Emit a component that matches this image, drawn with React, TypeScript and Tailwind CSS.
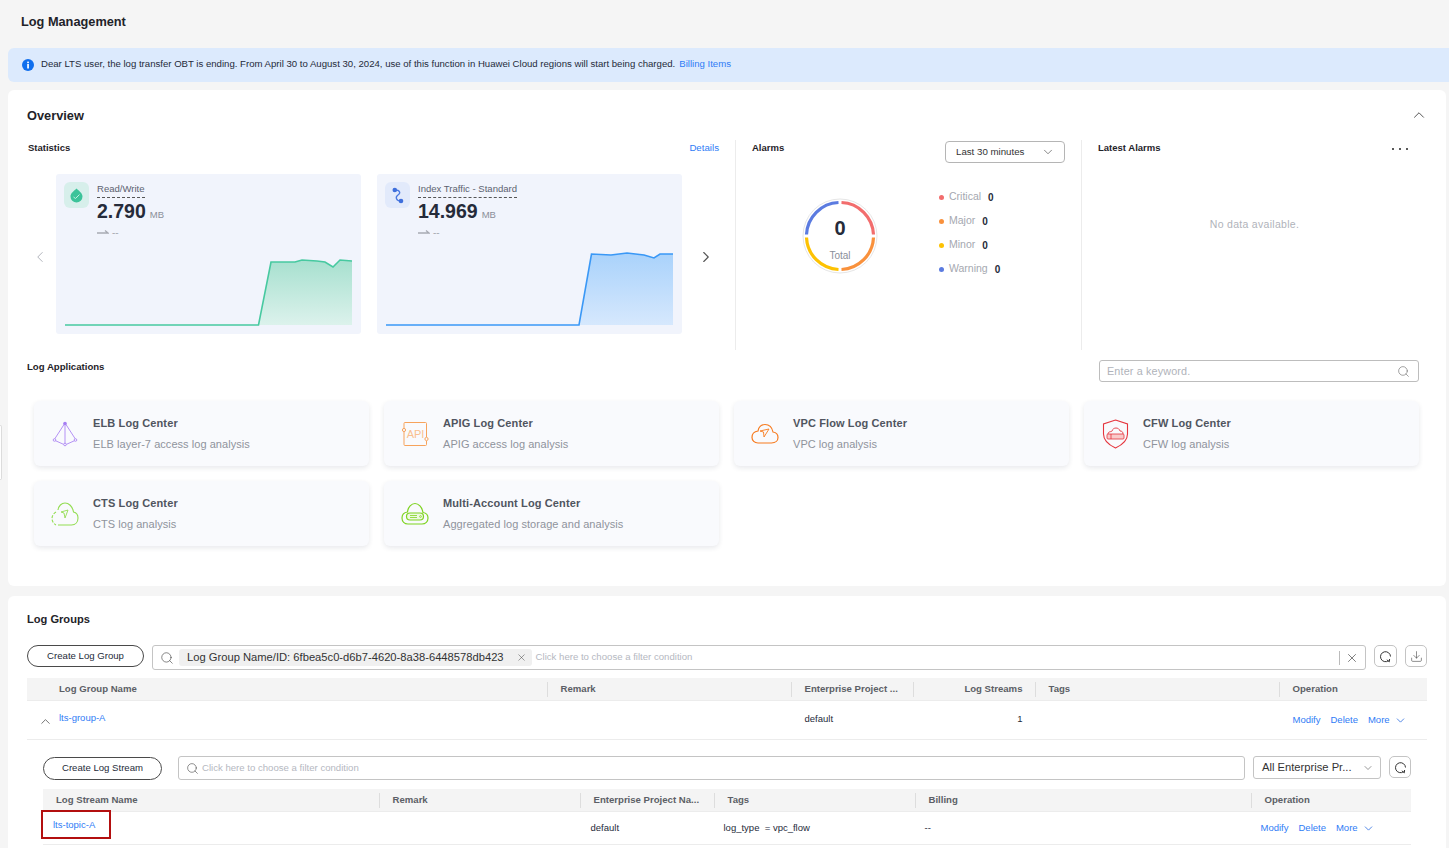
import React from "react";
import { ChevronUp, ChevronDown, ChevronLeft, ChevronRight, Search, X, Download } from "lucide-react";

const greenLine = "M1 73 L194.500 73 L207 10 L231 10 L238 8 L253 9 L261 10 L269 15 L276 8 L288 9";
const blueLine = "M1 73 L194 73 L206.500 2 L226 3 L242 1 L259 3 L269 6 L275 2 L288 2";

const Refresh = () => (
  <svg width="13" height="13" viewBox="0 0 13 13" fill="none" stroke="#333" strokeWidth="1">
    <path d="M9.500 10.700 A5 5 0 1 1 11.500 6.500" />
    <path d="M7.800 9.800 L10.300 11.800 L10.600 9" />
  </svg>
);

const Chart = ({ line, stroke, id, from, to }: { line: string; stroke: string; id: string; from: string; to: string }) => (
  <svg viewBox="0 0 288 75" className="w-[288px] h-[75px] ml-[8px] mb-[7px] block">
    <defs>
      <linearGradient id={id} x1="0" y1="0" x2="0" y2="1">
        <stop offset="0" stopColor={from} />
        <stop offset="1" stopColor={to} />
      </linearGradient>
    </defs>
    <path d={`${line} L288 73 Z`} fill={`url(#${id})`} />
    <path d={line} fill="none" stroke={stroke} strokeWidth="1.600" />
  </svg>
);

const StatCard = ({ icon, iconBg, label, value, children }: { icon: React.ReactNode; iconBg: string; label: string; value: string; children: React.ReactNode }) => (
  <div className="w-[305px] h-[160px] bg-[#f1f4fc] rounded-[3px] flex flex-col justify-between">
    <div className="flex pt-2 pl-2">
      <div className={`w-[25px] h-[26px] rounded-md flex items-center justify-center ${iconBg}`}>{icon}</div>
      <div className="ml-2 flex flex-col items-start">
        <span className="text-[9.550px] leading-[13px] text-[#5c6270] pb-[2px] border-b border-dashed border-[#555]">{label}</span>
        <div className="flex items-baseline mt-[1px] h-[25px]">
          <span className="text-[19.500px] leading-[24px] font-bold text-[#252b3a]">{value}</span>
          <span className="text-[9.500px] text-[#8a8e99] ml-[4px]">MB</span>
        </div>
        <div className="flex items-center text-[#a8abb3] text-[10px] leading-[12px] mt-[3px] h-3">
          <svg width="12" height="8" viewBox="0 0 12 8" fill="none">
            <path d="M0 4 H11 M8 1.500 L11 4 L8 4" stroke="#a8abb3" strokeWidth="1.300" />
          </svg>
          <span className="ml-[3px]">--</span>
        </div>
      </div>
    </div>
    {children}
  </div>
);

const Legend = ({ color, label, count }: { color: string; label: string; count: number }) => (
  <div className="flex items-center h-6">
    <span className={`w-[5px] h-[5px] rounded-full ${color}`} />
    <span className="ml-[5px] text-[#a5a8b0] text-[10.500px]">{label}</span>
    <span className="ml-[7px] text-[#252b3a] text-[10px] font-bold">{count}</span>
  </div>
);

const AppCard = ({ icon, title, desc }: { icon: React.ReactNode; title: string; desc: string }) => (
  <div className="h-[65px] bg-[#f9fafd] rounded-md shadow-[0_2px_5px_rgba(30,40,70,0.10)] flex items-center pl-[17px]">
    <div className="w-[28px] h-[28px] flex items-center justify-center shrink-0">{icon}</div>
    <div className="ml-[14px] flex flex-col gap-[7px]">
      <span className="text-[11px] leading-[14px] font-semibold tracking-[0.12px] text-[#50555f]">{title}</span>
      <span className="text-[11px] leading-[14px] tracking-[0.05px] text-[#8f939c]">{desc}</span>
    </div>
  </div>
);

const HeadCell = ({ children, first, right, pl }: { children: string; first?: boolean; right?: boolean; pl?: string }) => (
  <div className={`h-[15px] flex items-center text-[9.600px] font-semibold text-[#5c5f66] whitespace-nowrap ${first ? "" : "border-l border-[#dddddd]"} ${right ? "justify-end pr-3" : "pl-[13px]"} ${pl ?? ""}`}>
    {children}
  </div>
);

const Ops = () => (
  <div className="flex items-center text-[9.500px] text-[#2f7cf6] pl-[14px] gap-[10px]">
    <span>Modify</span>
    <span>Delete</span>
    <span className="flex items-center gap-[4px]">
      More <ChevronDown size={13} strokeWidth={1.500} className="text-[#2f6fe0]" />
    </span>
  </div>
);

const IconButton = ({ children, w }: { children: React.ReactNode; w: string }) => (
  <div className={`h-[22px] ${w} border border-[#c4c4c4] rounded-[5px] flex items-center justify-center text-[#333] shrink-0`}>{children}</div>
);

export default function App() {
  return (
    <div className="w-[1449px] h-[848px] overflow-hidden bg-[#f5f5f5] relative font-['Liberation_Sans',Arial,sans-serif]">
      <div className="absolute left-0 top-[425px] w-[2px] h-[55px] bg-white border-r border-y border-[#dcdcdc] rounded-r-sm" />

      <div className="h-[48px] pl-[21px] pt-[14px] text-[12.750px] leading-[15px] font-semibold text-[#1f2329]">Log Management</div>

      <div className="ml-2 h-[34px] bg-[#dceafd] rounded-l-md flex items-center pl-[14px] text-[9.600px] text-[#252b3a]">
        <svg width="12" height="12" viewBox="0 0 12 12">
          <circle cx="6" cy="6" r="6" fill="#0f6fee" />
          <rect x="5.200" y="5" width="1.700" height="4.500" fill="#fff" />
          <rect x="5.200" y="2.600" width="1.700" height="1.600" fill="#fff" />
        </svg>
        <span className="ml-[7px] -mt-px">Dear LTS user, the log transfer OBT is ending. From April 30 to August 30, 2024, use of this function in Huawei Cloud regions will start being charged.</span>
        <span className="ml-[4px] -mt-px text-[#2f7cf6]">Billing Items</span>
      </div>

      <div className="ml-2 mr-[3px] mt-2 h-[496px] bg-white rounded-md flex flex-col">
        <div className="h-[50px] pl-[19px] pr-[18px] flex items-center justify-between">
          <span className="text-[12.800px] font-semibold text-[#1f2329] mt-[1px]">Overview</span>
          <ChevronUp size={18} strokeWidth={1.100} className="text-[#333]" />
        </div>

        <div className="flex h-[210px]">
          <div className="w-[727px] pl-[20px] relative">
            <div className="flex justify-between pr-[16px] pt-[2px] text-[9.500px] leading-[11px]">
              <span className="font-bold text-[#1f2329]">Statistics</span>
              <span className="text-[#2f7cf6] text-[9.700px]">Details</span>
            </div>
            <div className="flex items-center mt-[21px]">
              <ChevronLeft size={18} strokeWidth={1.300} className="text-[#b0b3ba] ml-[3px] mt-[6px]" />
              <div className="ml-[7px] flex gap-4">
                <StatCard
                  iconBg="bg-[#d7efeb]"
                  label="Read/Write"
                  value="2.790"
                  icon={
                    <svg width="13" height="15" viewBox="0 0 13 15">
                      <path d="M6.500 0.500 C9 3 12.500 5 12.500 8.500 A6 6 0 0 1 0.500 8.500 C0.500 5 4 3 6.500 0.500 Z" fill="#3cc39a" />
                      <path d="M3.500 9 L5.500 10.500 L9.500 6.500" stroke="#bff0e0" strokeWidth="1" fill="none" />
                    </svg>
                  }
                >
                  <Chart line={greenLine} stroke="#47c9a0" id="greenFill" from="#a7e0cf" to="#dcf2ec" />
                </StatCard>
                <StatCard
                  iconBg="bg-[#e2eafb]"
                  label="Index Traffic - Standard"
                  value="14.969"
                  icon={
                    <svg width="12" height="17" viewBox="0 0 12 17" fill="none">
                      <path d="M3 3 C8 3 9 6 6 8 C3 10 4 14 9 14" stroke="#4a78e0" strokeWidth="1.300" />
                      <circle cx="2.800" cy="3" r="2.300" fill="#3f6fdc" />
                      <circle cx="9" cy="14" r="2.300" fill="#3f6fdc" />
                    </svg>
                  }
                >
                  <Chart line={blueLine} stroke="#3a98f6" id="blueFill" from="#a9d2fb" to="#d6e8fd" />
                </StatCard>
              </div>
              <ChevronRight size={18} strokeWidth={1.500} className="text-[#555] ml-[15px] mt-[6px]" />
            </div>
          </div>

          <div className="w-[346px] border-l border-[#ececec] pl-4 pr-4">
            <div className="flex justify-between items-start h-[23px]">
              <span className="text-[9.500px] leading-[11px] font-bold text-[#1f2329] pt-[2px]">Alarms</span>
              <div className="w-[120px] h-[22px] mt-[1px] border border-[#b5b5b5] rounded-[4px] flex items-center justify-between pl-[10px] pr-[9px] text-[9.700px] text-[#333]">
                Last 30 minutes
                <ChevronDown size={14} strokeWidth={1} />
              </div>
            </div>
            <div className="flex mt-[22px]">
              <div className="w-[76px] h-[76px] ml-[50px] mt-[13px] relative flex flex-col items-center">
                <svg width="76" height="76" viewBox="0 0 76 76" className="absolute inset-0" fill="none" strokeWidth="3.200">
                  <circle cx="38" cy="38" r="37" stroke="#e6e6e6" strokeWidth="1" />
                  <path d="M39.500 4.500 A33.500 33.500 0 0 1 71.500 36.500" stroke="#f26d6d" />
                  <path d="M71.500 39.500 A33.500 33.500 0 0 1 39.500 71.500" stroke="#f9913c" />
                  <path d="M36.500 71.500 A33.500 33.500 0 0 1 4.500 39.500" stroke="#fdc203" />
                  <path d="M4.500 36.500 A33.500 33.500 0 0 1 36.500 4.500" stroke="#5b7be0" />
                </svg>
                <span className="mt-[18px] text-[20px] leading-[24px] font-bold text-[#252b3a]">0</span>
                <span className="mt-[10px] text-[10px] leading-[12px] text-[#8a8e99]">Total</span>
              </div>
              <div className="ml-[61px] flex flex-col">
                <Legend color="bg-[#f26d6d]" label="Critical" count={0} />
                <Legend color="bg-[#f9913c]" label="Major" count={0} />
                <Legend color="bg-[#fdc203]" label="Minor" count={0} />
                <Legend color="bg-[#5b7be0]" label="Warning" count={0} />
              </div>
            </div>
          </div>

          <div className="w-[338px] border-l border-[#ececec] pl-4">
            <div className="flex justify-between items-center h-[14px] pr-[11px]">
              <span className="text-[9.500px] leading-[11px] font-bold text-[#1f2329]">Latest Alarms</span>
              <span className="flex gap-[4.500px] mt-[4px]">
                <i className="w-[2.500px] h-[2.500px] bg-[#222] rounded-full" />
                <i className="w-[2.500px] h-[2.500px] bg-[#222] rounded-full" />
                <i className="w-[2.500px] h-[2.500px] bg-[#222] rounded-full" />
              </span>
            </div>
            <div className="mt-[63px] text-center text-[10.500px] tracking-[0.3px] text-[#b0b3ba] pr-[8px]">No data available.</div>
          </div>
        </div>

        <div className="flex justify-between items-center h-[32px] pl-[19px] pr-[27px] mt-[1px]">
          <span className="text-[9.600px] font-bold text-[#1f2329]">Log Applications</span>
          <div className="w-[320px] h-[22px] mt-2 border border-[#bdbdbd] rounded-[3px] flex items-center justify-between pl-[7px] pr-[8px] text-[10.800px] tracking-[0.15px] text-[#b0b3ba]">
            Enter a keyword.
            <Search size={13} strokeWidth={1} className="text-[#555]" />
          </div>
        </div>

        <div className="grid grid-cols-[335px_335px_335px_335px] gap-x-[15px] gap-y-[15px] pl-[26px] mt-[18px]">
          <AppCard
            title="ELB Log Center"
            desc="ELB layer-7 access log analysis"
            icon={
              <svg width="26" height="26" viewBox="0 0 26 26" fill="none" stroke="#b592f5" strokeWidth="1">
                <path d="M13 2 L2 19 L13 24 L24 19 Z M13 2 V24" />
                <circle cx="13" cy="2.500" r="1.800" fill="#a67ef2" stroke="none" />
                <circle cx="2.500" cy="19" r="1.300" fill="#f9fafd" />
                <circle cx="23.500" cy="19" r="1.300" fill="#f9fafd" />
                <circle cx="13" cy="23.500" r="1.300" fill="#f9fafd" />
              </svg>
            }
          />
          <AppCard
            title="APIG Log Center"
            desc="APIG access log analysis"
            icon={
              <svg width="28" height="26" viewBox="0 0 28 26" fill="none" stroke="#f7a35c" strokeWidth="1">
                <path d="M3 7 V2.500 Q3 1.500 4 1.500 H24.500 Q25.500 1.500 25.500 2.500 V16 M25.500 20 V23.500 Q25.500 24.500 24.500 24.500 H4 Q3 24.500 3 23.500 V11" />
                <circle cx="3" cy="9" r="1.600" />
                <circle cx="25.500" cy="18" r="1.600" />
                <text x="14.500" y="17" textAnchor="middle" fontSize="11" stroke="none" fill="#f9c08f" fontFamily="Liberation Sans">API</text>
              </svg>
            }
          />
          <AppCard
            title="VPC Flow Log Center"
            desc="VPC log analysis"
            icon={
              <svg width="28" height="22" viewBox="0 0 28 22" fill="none" stroke="#f77a1e" strokeWidth="1.200">
                <path d="M7 20 H20.500 C24.500 20 27 17.500 27 14.500 C27 11.500 25 9.500 22 9 C21 4 17.500 1.500 14 1.500 C10.500 1.500 7.500 4 7 8 C3.500 8.500 1 11 1 14.500 C1 17.500 3.500 20 7 20 Z" />
                <path d="M9 8 L18 6 L13 14 L12.500 9 Z" strokeWidth="0.900" />
              </svg>
            }
          />
          <AppCard
            title="CFW Log Center"
            desc="CFW log analysis"
            icon={
              <svg width="27" height="30" viewBox="0 0 27 30" fill="none" stroke="#e5343d" strokeWidth="1.100">
                <path d="M13.500 1 L25.500 5 V15 C25.500 21 20 26 13.500 29 C7 26 1.500 21 1.500 15 V5 Z" />
                <path d="M6 15 C6 12 10 13 10 12 C11 8 17 8 18 12 C20 12 21 13 21 15" strokeWidth="0.900" />
                <rect x="5" y="15" width="17" height="5" rx="1" fill="#f9caca" strokeWidth="0.800" />
                <path d="M9 15 V20" strokeWidth="0.800" />
              </svg>
            }
          />
          <AppCard
            title="CTS Log Center"
            desc="CTS log analysis"
            icon={
              <svg width="28" height="26" viewBox="0 0 28 26" fill="none" stroke="#93dd52" strokeWidth="1.100">
                <path d="M7 24 H20.500 C24.500 24 27 21 27 17 C27 13 25 11.500 22.500 11 C21.500 5 17.500 2 14 2 C10.500 2 7.500 5 7 9" />
                <path d="M5 11 C2.500 12.500 1 15 1 17.500 C1 20.500 3 23 5 24" strokeDasharray="3 1.500" />
                <path d="M10 11 L17 9 L14 17 L13 12 Z" strokeWidth="0.900" />
              </svg>
            }
          />
          <AppCard
            title="Multi-Account Log Center"
            desc="Aggregated log storage and analysis"
            icon={
              <svg width="28" height="24" viewBox="0 0 28 24" fill="none" stroke="#7ed321" strokeWidth="1.200">
                <path d="M7 22 H21 C24.500 22 27 19.500 27 16 C27 13 25 11 22 10.500 C21 5 17.500 1.500 14 1.500 C10.500 1.500 7 5 6.500 10 C3 10.500 1 13 1 16 C1 19.500 3.500 22 7 22 Z" />
                <rect x="5.500" y="11" width="17" height="7" rx="3.500" fill="#eef9e2" />
                <path d="M9 13.500 H16 M9 15.500 H16" strokeWidth="0.800" />
                <circle cx="19.500" cy="14.500" r="0.900" strokeWidth="0.700" />
              </svg>
            }
          />
        </div>
      </div>

      <div className="ml-2 mr-[3px] mt-[10px] h-[300px] bg-white rounded-md pl-[19px] pr-[19px]">
        <div className="pt-[17px] h-[49px] text-[11.100px] leading-[13px] font-bold text-[#1f2329]">Log Groups</div>

        <div className="flex">
          <div className="w-[117px] h-[22px] border border-[#4a4a4a] rounded-full flex items-center justify-center text-[9.600px] text-[#252b3a]">Create Log Group</div>
          <div className="ml-2 w-[1214px] h-[25px] border border-[#c4c4c4] rounded-[3px] flex items-center pl-[3px]">
            <Search size={14} strokeWidth={1} className="text-[#333] ml-[4px]" />
            <div className="ml-[5px] h-[17px] bg-[#f0f0f0] rounded-[3px] flex items-center pl-[8px] pr-[5px] text-[11.200px] text-[#333]">
              Log Group Name/ID: 6fbea5c0-d6b7-4620-8a38-6448578db423
              <X size={11} strokeWidth={1} className="ml-[12px] text-[#333]" />
            </div>
            <span className="ml-[4px] text-[9.600px] text-[#b5b8bf]">Click here to choose a filter condition</span>
            <span className="ml-auto w-px h-[14px] bg-[#bbb]" />
            <X size={14} strokeWidth={1} className="ml-[5px] mr-[6px] text-[#222]" />
          </div>
          <div className="ml-2"><IconButton w="w-[23px]"><Refresh /></IconButton></div>
          <div className="ml-2"><IconButton w="w-[22px]"><Download size={13} strokeWidth={1} /></IconButton></div>
        </div>

        <div className="mt-2 h-[23px] bg-[#f4f4f4] grid grid-cols-[519.500px_244px_122px_122px_244px_1fr] items-center border-b border-[#ececec]">
          <HeadCell first pl="pl-[32px]">Log Group Name</HeadCell>
          <HeadCell>Remark</HeadCell>
          <HeadCell>Enterprise Project ...</HeadCell>
          <HeadCell right>Log Streams</HeadCell>
          <HeadCell>Tags</HeadCell>
          <HeadCell>Operation</HeadCell>
        </div>
        <div className="h-[39px] grid grid-cols-[519.500px_244px_122px_122px_244px_1fr] items-center border-b border-[#ececec] text-[9.500px] text-[#252b3a]">
          <div className="flex items-center pl-[11px]">
            <ChevronUp size={15} strokeWidth={1.300} className="text-[#555] mt-[2px]" />
            <span className="ml-[6px] -mt-[3px] text-[#2f7cf6]">lts-group-A</span>
          </div>
          <div />
          <div className="pl-[14px] -mt-px">default</div>
          <div className="text-right pr-3 -mt-px">1</div>
          <div />
          <Ops />
        </div>

        <div className="ml-4 mr-4 pt-4">
          <div className="flex items-start h-[24px]">
            <div className="w-[119px] h-[23px] mt-[1px] border border-[#4a4a4a] rounded-full flex items-center justify-center text-[9.600px] text-[#252b3a]">Create Log Stream</div>
            <div className="ml-4 w-[1067px] h-[24px] border border-[#c4c4c4] rounded-[3px] flex items-center pl-[7px]">
              <Search size={13} strokeWidth={1} className="text-[#333]" />
              <span className="ml-[3px] text-[9.600px] text-[#b5b8bf]">Click here to choose a filter condition</span>
            </div>
            <div className="ml-2 w-[128px] h-[23px] border border-[#c4c4c4] rounded-[3px] flex items-center justify-between pl-[8px] pr-[6px] text-[11.200px] text-[#333]">
              All Enterprise Pr...
              <ChevronDown size={12} strokeWidth={1} />
            </div>
            <div className="ml-2"><IconButton w="w-[22px]"><Refresh /></IconButton></div>
          </div>

          <div className="mt-[9px] h-[23px] bg-[#f4f4f4] grid grid-cols-[335.500px_201px_134px_201px_336px_1fr] items-center border-b border-[#ececec]">
            <HeadCell first>Log Stream Name</HeadCell>
            <HeadCell>Remark</HeadCell>
            <HeadCell>Enterprise Project Na...</HeadCell>
            <HeadCell>Tags</HeadCell>
            <HeadCell>Billing</HeadCell>
            <HeadCell>Operation</HeadCell>
          </div>
          <div className="relative h-[33px] grid grid-cols-[335.500px_201px_134px_201px_336px_1fr] items-center border-b border-[#ececec] text-[9.500px] text-[#252b3a]">
            <div className="pl-[10px] -mt-[6px] text-[#2f7cf6]">lts-topic-A</div>
            <div />
            <div className="pl-[11px]">default</div>
            <div className="pl-[10px]">log_type &nbsp;= vpc_flow</div>
            <div className="pl-[10px]">--</div>
            <div className="-ml-[4px]"><Ops /></div>
            <div className="absolute left-[-2px] top-[-2px] w-[70px] h-[29px] border-2 border-[#b30f0f]" />
          </div>
        </div>
      </div>
    </div>
  );
}
